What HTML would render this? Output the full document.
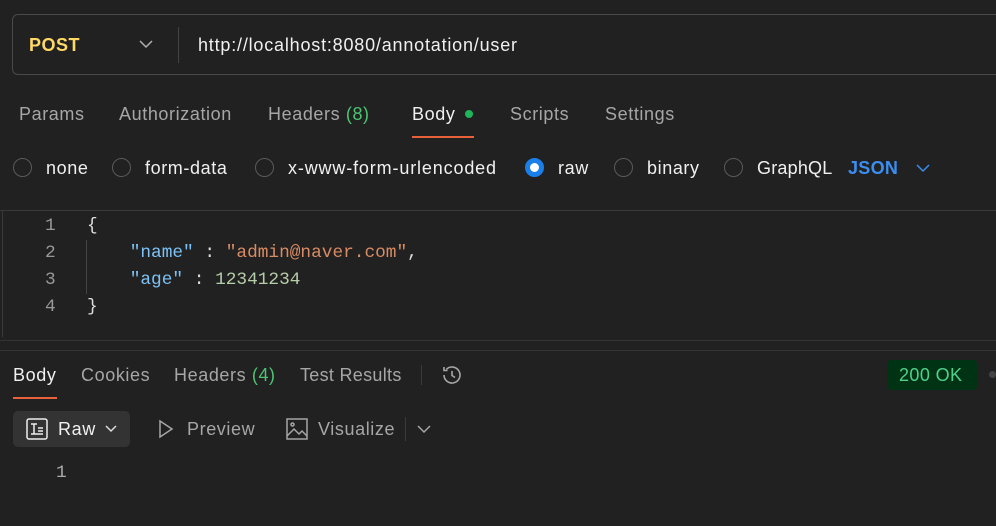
<!DOCTYPE html>
<html><head><style>
body{margin:0;width:996px;height:526px;background:#212121;overflow:hidden;font-family:"Liberation Sans",sans-serif;position:relative;color:#fff}
.a{position:absolute;white-space:nowrap}
.t{font-size:18px;letter-spacing:0.6px;color:#a6a6a6}
.r{position:absolute;width:19px;height:19px;border:1.5px solid #5a5a5a;border-radius:50%;box-sizing:border-box}
.m{font-family:"Liberation Mono",monospace;font-size:17.8px}
</style></head><body>
<div class="a" style="left:12px;top:14px;width:1000px;height:61px;border:1px solid #4a4a4a;border-radius:6px;box-sizing:border-box"></div>
<div class="a" style="left:178px;top:27px;width:1px;height:36px;background:#444"></div>
<div class="a" style="left:29px;top:35px;font-size:18px;letter-spacing:0.5px;font-weight:bold;color:#ffd866">POST</div>
<svg class="a" style="left:138px;top:39px" width="16" height="10"><path d="M2 2l6 6 6-6" stroke="#b0b0b0" stroke-width="1.5" fill="none"/></svg>
<div class="a t" style="left:198px;top:35px;color:#f0f0f0;letter-spacing:0.8px">http://localhost:8080/annotation/user</div>

<div class="a t" style="left:19px;top:104px">Params</div>
<div class="a t" style="left:119px;top:104px">Authorization</div>
<div class="a t" style="left:268px;top:104px">Headers <span style="color:#4cc472">(8)</span></div>
<div class="a t" style="left:412px;top:104px;color:#f0f0f0">Body</div>
<div class="a" style="left:465px;top:110px;width:8px;height:8px;border-radius:50%;background:#1fb55a"></div>
<div class="a" style="left:412px;top:136px;width:62px;height:2px;background:#e8613b"></div>
<div class="a t" style="left:510px;top:104px">Scripts</div>
<div class="a t" style="left:605px;top:104px">Settings</div>

<div class="r" style="left:13px;top:158px"></div><div class="a t" style="left:46px;top:158px;color:#f0f0f0">none</div>
<div class="r" style="left:112px;top:158px"></div><div class="a t" style="left:145px;top:158px;color:#f0f0f0">form-data</div>
<div class="r" style="left:255px;top:158px"></div><div class="a t" style="left:288px;top:158px;color:#f0f0f0;letter-spacing:0.85px">x-www-form-urlencoded</div>
<div class="r" style="left:525px;top:158px;border:5.5px solid #1a7fe8;background:#fff"></div><div class="a t" style="left:558px;top:158px;color:#f0f0f0">raw</div>
<div class="r" style="left:614px;top:158px"></div><div class="a t" style="left:647px;top:158px;color:#f0f0f0">binary</div>
<div class="r" style="left:724px;top:158px"></div><div class="a t" style="left:757px;top:158px;color:#f0f0f0;letter-spacing:0.2px">GraphQL</div>
<div class="a" style="left:848px;top:158px;font-size:18px;letter-spacing:0.3px;font-weight:bold;color:#3b8ef0">JSON</div>
<svg class="a" style="left:915px;top:163px" width="16" height="10"><path d="M2 2l6 6 6-6" stroke="#3b8ef0" stroke-width="1.5" fill="none"/></svg>

<div class="a" style="left:0;top:210px;width:996px;height:1px;background:#3a3a3a"></div>
<div class="a" style="left:2px;top:211px;width:1px;height:126px;background:#3a3a3a"></div>
<div class="a" style="left:0;top:340px;width:996px;height:1px;background:#333"></div>
<div class="a" style="left:0;top:350px;width:996px;height:1px;background:#333"></div>
<div class="a" style="left:86px;top:240px;width:1px;height:54px;background:#444"></div>
<div class="a m" style="left:45px;top:213px;color:#999;line-height:27px">1<br>2<br>3<br>4</div>
<div class="a m" style="left:87px;top:213px;line-height:27px;color:#ddd">{<br>&nbsp;&nbsp;&nbsp;&nbsp;<span style="color:#7cc2f7">"name"</span> : <span style="color:#d98b63">"admin@naver.com"</span>,<br>&nbsp;&nbsp;&nbsp;&nbsp;<span style="color:#7cc2f7">"age"</span> : <span style="color:#b5cea8">12341234</span><br>}</div>

<div class="a t" style="left:13px;top:365px;color:#f0f0f0">Body</div>
<div class="a" style="left:13px;top:397px;width:44px;height:2px;background:#e8613b"></div>
<div class="a t" style="left:81px;top:365px">Cookies</div>
<div class="a t" style="left:174px;top:365px">Headers <span style="color:#4cc472">(4)</span></div>
<div class="a t" style="left:300px;top:365px;letter-spacing:0.3px">Test Results</div>
<div class="a" style="left:421px;top:365px;width:1px;height:20px;background:#3a3a3a"></div>
<svg class="a" style="left:440px;top:363px" width="24" height="24" fill="none" stroke="#a6a6a6" stroke-width="1.6"><path d="M4 12a8 8 0 1 0 2.3-5.6M4 4v3.5h3.5M12 8v4.5l3 2"/></svg>
<div class="a" style="left:887px;top:360px;width:90px;height:30px;border-radius:4px;background:#003314"></div>
<div class="a" style="left:899px;top:365px;font-size:18px;letter-spacing:0.4px;color:#4fd18b">200 OK</div>
<div class="a" style="left:989px;top:371px;width:7px;height:7px;border-radius:50%;background:#444"></div>

<div class="a" style="left:13px;top:411px;width:117px;height:36px;border-radius:5px;background:#333"></div>
<svg class="a" style="left:26px;top:418px" width="22" height="22" fill="none" stroke="#eee" stroke-width="1.5"><rect x="1" y="1" width="20" height="20" rx="2"/><path d="M5 6h6M8 6v10M5 16h12M12 10h5M12 13h5"/></svg>
<div class="a t" style="left:58px;top:419px;color:#f0f0f0">Raw</div>
<svg class="a" style="left:104px;top:424px" width="14" height="10"><path d="M2 2l5 5 5-5" stroke="#ddd" stroke-width="1.5" fill="none"/></svg>
<svg class="a" style="left:158px;top:419px" width="16" height="20" fill="none" stroke="#a6a6a6" stroke-width="1.5"><path d="M2 2l12 8-12 8z"/></svg>
<div class="a t" style="left:187px;top:419px">Preview</div>
<svg class="a" style="left:286px;top:418px" width="22" height="22" fill="none" stroke="#a6a6a6" stroke-width="1.5"><rect x="1" y="1" width="20" height="20"/><path d="M1 18l7-7 5 5 3-3 5 5"/><circle cx="6.5" cy="6.5" r="1.5"/></svg>
<div class="a t" style="left:318px;top:419px">Visualize</div>
<div class="a" style="left:405px;top:417px;width:1px;height:24px;background:#3a3a3a"></div>
<svg class="a" style="left:416px;top:424px" width="16" height="10"><path d="M2 2l6 6 6-6" stroke="#a6a6a6" stroke-width="1.5" fill="none"/></svg>
<div class="a m" style="left:56px;top:463px;color:#aaa">1</div>
</body></html>
